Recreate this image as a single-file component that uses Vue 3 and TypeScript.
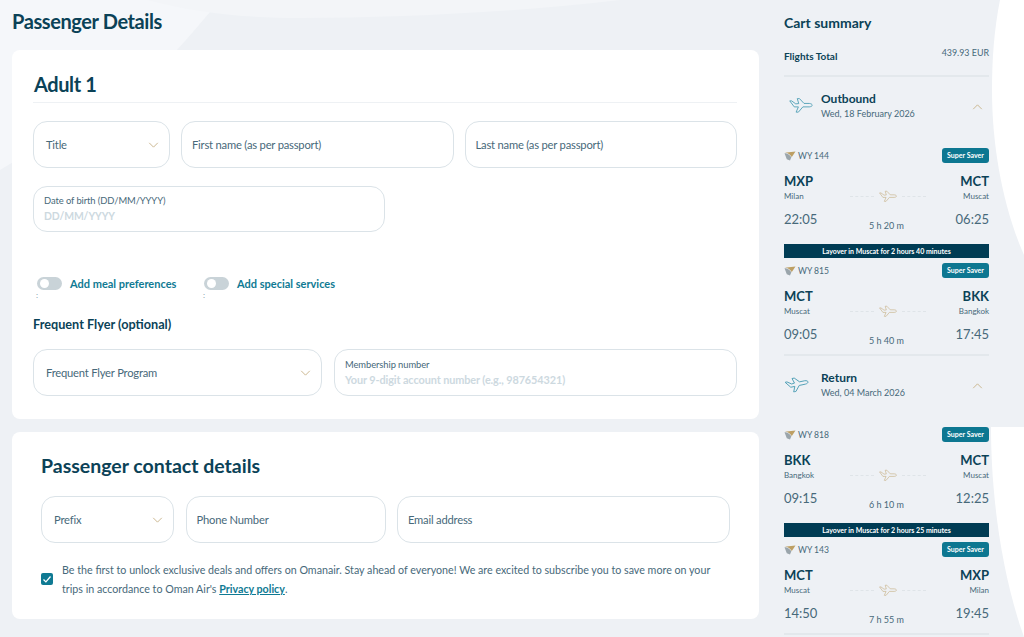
<script setup lang="ts">
interface Leg { no: string; from: string; fromCity: string; to: string; toCity: string; dep: string; arr: string; dur: string; layover?: string }
interface Section { name: string; date: string; back: boolean; legs: Leg[] }
const sections: Section[] = [
  { name: 'Outbound', date: 'Wed, 18 February 2026', back: false, legs: [
    { no: 'WY 144', from: 'MXP', fromCity: 'Milan', to: 'MCT', toCity: 'Muscat', dep: '22:05', arr: '06:25', dur: '5 h 20 m', layover: 'Layover in Muscat for 2 hours 40 minutes' },
    { no: 'WY 815', from: 'MCT', fromCity: 'Muscat', to: 'BKK', toCity: 'Bangkok', dep: '09:05', arr: '17:45', dur: '5 h 40 m' },
  ] },
  { name: 'Return', date: 'Wed, 04 March 2026', back: true, legs: [
    { no: 'WY 818', from: 'BKK', fromCity: 'Bangkok', to: 'MCT', toCity: 'Muscat', dep: '09:15', arr: '12:25', dur: '6 h 10 m', layover: 'Layover in Muscat for 2 hours 25 minutes' },
    { no: 'WY 143', from: 'MCT', fromCity: 'Muscat', to: 'MXP', toCity: 'Milan', dep: '14:50', arr: '19:45', dur: '7 h 55 m' },
  ] },
]
const planePath = 'M1 5 L3.5 5 L9 9 L13 8.6 L11 2 L14 2 L20 8.4 L27 8.4 C29.5 8.6 31 9.8 31 10.7 C31 11.8 29.5 12.8 27 13 L18.5 13 L12.5 20 L9.5 20 L12.5 13 L7 13 Z'
</script>

<template>
  <div class="page">
    <svg class="bg" viewBox="0 0 1024 637" aria-hidden="true">
      <path fill="#f5f7fa" d="M0 0 H220 C205 18 190 36 177 50 C120 90 60 135 0 170 Z" />
      <path fill="#f3f5f8" d="M147 0 C200 14 250 18 300 18 C400 18 520 12 620 0 Z" />
      <path fill="#ffffff" d="M1000 0 C994 30 992 60 992 90 C992 150 1004 210 1024 255 V0 Z" />
      <path fill="#ffffff" d="M991 427 C991 490 1000 570 1024 637 V427 Z" />
    </svg>
    <main class="main">
      <h1 class="title">Passenger Details</h1>
      <section class="card adult">
        <h2 class="adult-h">Adult 1</h2>
        <div class="row r1">
          <div class="field sel title-f"><span>Title</span><svg class="chev" viewBox="0 0 12 7"><path d="M1 1l5 5 5-5" /></svg></div>
          <div class="field grow"><span>First name (as per passport)</span></div>
          <div class="field grow"><span>Last name (as per passport)</span></div>
        </div>
        <div class="field dob">
          <label>Date of birth (DD/MM/YYYY)</label>
          <em>DD/MM/YYYY</em>
        </div>
        <div class="toggles">
          <div class="tg"><i class="switch"></i><b>Add meal preferences</b><s>:</s></div>
          <div class="tg"><i class="switch"></i><b>Add special services</b><s>:</s></div>
        </div>
        <h3 class="ff">Frequent Flyer (optional)</h3>
        <div class="row r3">
          <div class="field sel ff-sel"><span>Frequent Flyer Program</span><svg class="chev" viewBox="0 0 12 7"><path d="M1 1l5 5 5-5" /></svg></div>
          <div class="field stack grow">
            <label>Membership number</label>
            <em class="long">Your 9-digit account number (e.g., 987654321)</em>
          </div>
        </div>
      </section>
      <section class="card contact">
        <h2 class="contact-h">Passenger contact details</h2>
        <div class="row r4">
          <div class="field sel prefix"><span>Prefix</span><svg class="chev" viewBox="0 0 12 7"><path d="M1 1l5 5 5-5" /></svg></div>
          <div class="field phone"><span>Phone Number</span></div>
          <div class="field grow"><span>Email address</span></div>
        </div>
        <div class="consent">
          <div class="check"><svg viewBox="0 0 12 12"><path d="M2.5 6.5l2.4 2.4 4.6-5.4" /></svg></div>
          <p>Be the first to unlock exclusive deals and offers on Omanair. Stay ahead of everyone! We are excited to subscribe you to save more on your trips in accordance to Oman Air's <a>Privacy policy</a>.</p>
        </div>
      </section>
    </main>
    <aside class="cart">
      <h2 class="cart-h">Cart summary</h2>
      <div class="total"><b>Flights Total</b><span>439.93 EUR</span></div>
      <div v-for="s in sections" :key="s.name" class="sec" :class="{ back: s.back }">
        <div class="sec-head">
          <svg class="sec-plane" :class="{ tilt: s.back }" viewBox="0 0 32 21"><path :d="planePath" /></svg>
          <div class="sec-txt"><b>{{ s.name }}</b><span>{{ s.date }}</span></div>
          <svg class="chev up" viewBox="0 0 12 7"><path d="M1 6l5-5 5 5" /></svg>
        </div>
        <div v-for="l in s.legs" :key="l.no" class="leg">
          <div class="leg-top">
            <span class="flight">
              <svg class="logo" viewBox="0 0 12 12"><path class="lg" d="M0 3 L12 1.5 L8 7.5 Q4 2.5 0 3 Z" /><path class="lb" d="M0 3.6 Q4 3.2 7.5 8 L6 11.5 L2.5 10 Z" /></svg>
              {{ l.no }}
            </span>
            <span class="badge">Super Saver</span>
          </div>
          <div class="codes"><b>{{ l.from }}</b><b>{{ l.to }}</b></div>
          <div class="cities">
            <span>{{ l.fromCity }}</span>
            <div class="path"><i></i><svg class="mini" viewBox="0 0 32 21"><path :d="planePath" /></svg><i></i></div>
            <span>{{ l.toCity }}</span>
          </div>
          <div class="times"><span>{{ l.dep }}</span><small>{{ l.dur }}</small><span>{{ l.arr }}</span></div>
          <div v-if="l.layover" class="layover">{{ l.layover }}</div>
          <div v-else class="leg-end"></div>
        </div>
      </div>
    </aside>
  </div>
</template>

<style>
html, body { margin: 0; height: 100%; overflow: hidden; background: #eef1f5; }
</style>

<style scoped>
* { box-sizing: border-box; }
.page {
  position: relative; width: 1024px; height: 637px; overflow: hidden;
  display: flex; background: #eef1f5; color: #0b4257;
  font-family: Lato, "Open Sans", sans-serif;
}
.bg { position: absolute; left: 0; top: 0; width: 1024px; height: 637px; }
.main { position: relative; width: 747px; margin-left: 12px; flex: none; }
.title { margin: 0; height: 50px; padding-top: 8px; font-size: 20px; line-height: 26px; font-weight: 700; letter-spacing: -.4px; }
.card { background: #fff; border-radius: 8px; }
.adult { height: 369px; padding: 21px 22px 0 21px; }
.adult-h { margin: 0; height: 32px; font-size: 20px; line-height: 26px; font-weight: 700; letter-spacing: -.4px; padding-left: 1px; border-bottom: 1px solid #eef1f4; }
.row { display: flex; gap: 11px; }
.r1 { margin-top: 18px; }
.field {
  height: 47px; border: 1px solid #dbe3e8; border-radius: 14px; background: #fff;
  display: flex; align-items: center; padding: 0 10px; font-size: 11.2px; letter-spacing: -.2px; color: #47697a;
  position: relative;
}
.grow { flex: 1; min-width: 0; }
.sel { padding-left: 12px; justify-content: space-between; }
.chev { width: 11px; height: 6px; fill: none; stroke: #c9b58c; stroke-width: 1.1; flex: none; }
.title-f { width: 137px; }
.dob { width: 352px; height: 46px; margin-top: 18px; flex-direction: column; align-items: flex-start; justify-content: center; }
.field label { font-size: 9.4px; line-height: 14px; letter-spacing: -.08px; color: #47697a; }
.field em { font-style: normal; font-weight: 700; font-size: 10.4px; line-height: 16px; color: #cdd9df; letter-spacing: -.1px; }
.field em.long { font-size: 10.9px; }
.toggles { display: flex; margin-top: 45px; height: 30px; padding-left: 4px; }
.tg { position: relative; width: 167px; display: flex; align-items: flex-start; }
.tg b { font-size: 11px; line-height: 13px; color: #0f7a93; font-weight: 700; margin-left: 8px; }
.tg s { position: absolute; left: -1px; top: 13px; font-size: 8px; text-decoration: none; color: #7f9aa8; }
.switch { width: 25px; height: 13px; border-radius: 7px; background: #c9d3d8; position: relative; display: block; }
.switch::after { content: ""; position: absolute; left: 3px; top: 2px; width: 9px; height: 9px; border-radius: 50%; background: #fff; }
.ff { margin: 9px 0 0; font-size: 12.7px; line-height: 16px; font-weight: 700; }
.r3 { margin-top: 17px; gap: 12px; }
.ff-sel { width: 289px; }
.stack { flex-direction: column; align-items: flex-start; justify-content: center; }
.contact { height: 187px; margin-top: 13px; padding: 20px 29px 0 29px; }
.contact-h { margin: 0; height: 44px; font-size: 19.5px; line-height: 28px; font-weight: 700; }
.r4 { gap: 11.5px; }
.prefix { width: 133px; }
.phone { width: 200px; }
.consent { display: flex; align-items: center; margin-top: 17px; gap: 9px; }
.check { width: 12px; height: 12px; border-radius: 2px; background: #0f7a93; flex: none; display: grid; place-items: center; }
.check svg { width: 12px; height: 12px; fill: none; stroke: #fff; stroke-width: 1.3; }
.consent p { margin: 0; font-size: 10.7px; line-height: 19px; color: #47697a; width: 672px; }
.consent a { color: #0f7a93; font-weight: 700; text-decoration: underline; }
.cart { position: relative; margin-left: 25px; width: 205px; flex: none; padding-top: 14px; }
.cart-h { margin: 0; font-size: 14px; line-height: 18px; font-weight: 700; }
.total { display: flex; justify-content: space-between; align-items: flex-start; height: 28px; margin-top: 15px; }
.total b { font-size: 10px; line-height: 14px; padding-top: 2px; }
.total span { color: #47697a; line-height: 12px; font-size: 8.9px; }
.sec { border-top: 2px solid #e3e8ec; }
.sec.back { border-top: 0; }
.sec-head { display: flex; align-items: flex-start; height: 71px; padding: 14px 6px 0 5px; }
.sec-plane { width: 24px; height: 16px; fill: none; stroke: #4f9fb6; stroke-width: 1.2; margin: 6px 8px 0 0; flex: none; }
.sec-plane.tilt { transform: rotate(-12deg); margin-left: -4px; margin-right: 12px; }
.sec-txt { flex: 1; display: flex; flex-direction: column; }
.sec-txt b { font-size: 12px; line-height: 15px; }
.sec-txt span { font-size: 9px; line-height: 15px; color: #47697a; }
.up { margin-top: 13px; }
.leg-top { display: flex; justify-content: space-between; align-items: center; height: 15px; }
.flight { display: flex; align-items: center; gap: 2px; font-size: 8.6px; color: #47697a; }
.logo { width: 12px; height: 11px; }
.lg { fill: #bd9f63; }
.lb { fill: #9aa5ab; }
.badge { background: #0d7791; color: #fff; font-size: 7px; font-weight: 700; line-height: 15px; height: 15px; width: 47px; text-align: center; border-radius: 3px; }
.codes { display: flex; justify-content: space-between; margin-top: 10px; font-size: 13px; line-height: 16px; }
.cities { display: flex; align-items: center; justify-content: space-between; font-size: 8px; line-height: 11px; color: #47697a; height: 14px; }
.cities > span { width: 50px; }
.cities > span:last-child { text-align: right; }
.path { display: flex; align-items: center; gap: 5px; margin-left: 2px; }
.path i { display: block; width: 24px; border-top: 1px dashed #dfe4e8; }
.mini { width: 18px; height: 12px; fill: none; stroke: #c9b58c; stroke-width: 1.2; }
.times { display: flex; justify-content: space-between; align-items: flex-start; margin-top: 7px; height: 28px; font-size: 13px; line-height: 18px; color: #47697a; }
.times small { font-size: 9px; line-height: 12px; margin-top: 10px; }
.layover { background: #003c54; color: #fff; font-size: 7px; font-weight: 700; text-align: center; height: 14px; line-height: 14px; margin-top: 6px; margin-bottom: 5px; }
.leg-end { border-bottom: 2px solid #e3e8ec; height: 3px; }
</style>
